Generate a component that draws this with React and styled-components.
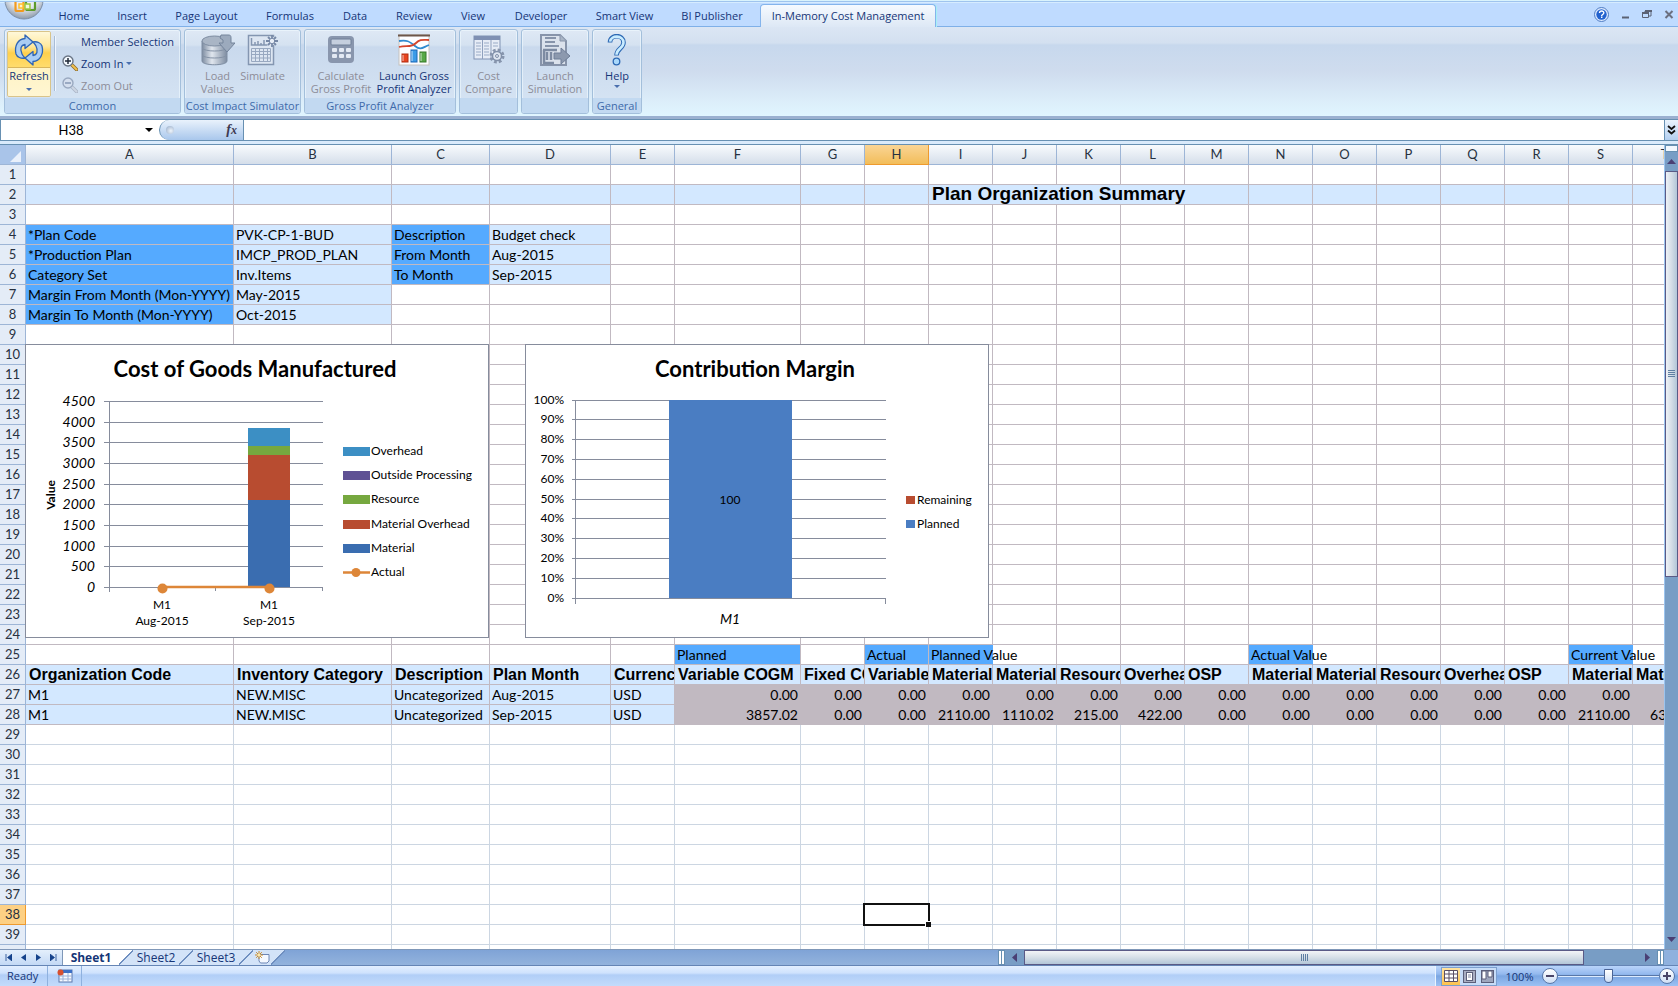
import React from "react";
import styled, { createGlobalStyle, css } from "styled-components";

const GlobalStyle=createGlobalStyle`
   *{
      box-sizing:border-box;
   }
   html,body,#root{
      height:100%;
      margin:0;
   }
   body{
      overflow:hidden;
      font-family:"Open Sans","Noto Sans",sans-serif;
      font-size:11px;
      color:#153577;
   }
   button,input{
      font:inherit;
      color:inherit;
      margin:0;
      padding:0;
      border:0;
      background:none;
   }
`

const tabs=[
   {label:"Home",width:58},
   {label:"Insert",width:58},
   {label:"Page Layout",width:91},
   {label:"Formulas",width:76},
   {label:"Data",width:54},
   {label:"Review",width:64},
   {label:"View",width:54},
   {label:"Developer",width:82},
   {label:"Smart View",width:85},
   {label:"BI Publisher",width:90},
]

const columns=[
   ["A",208],["B",158],["C",98],["D",121],["E",64],["F",126],["G",64],["H",64],["I",64],["J",64],
   ["K",64],["L",64],["M",64],["N",64],["O",64],["P",64],["Q",64],["R",64],["S",64],["T",64],
]

const strong=(text,spill)=>({text,fill:"strong",spill})
const light=(text)=>({text,fill:"light"})
const head=(text)=>({text,fill:"light",heading:true})
const grey=(text)=>({text,fill:"grey",number:true})

const greyRow=(values)=>{
   const cells={}
   values.forEach((value,i)=>{
      cells["FGHIJKLMNOPQRST"[i]]=grey(value)
   })
   return cells
}

const headings=[
   "Organization Code","Inventory Category","Description","Plan Month","Currency","Variable COGM","Fixed COGM",
   "Variable COGM","Material","Material Overhead","Resource","Overhead","OSP","Material","Material Overhead",
   "Resource","Overhead","OSP","Material","Material Overhead",
]

const titleRow={}
columns.forEach(([name])=>{
   titleRow[name]=light("")
})
titleRow.I={text:"Plan Organization Summary",fill:"light",title:true,span:5}

const headingRow={}
columns.forEach(([name],i)=>{
   headingRow[name]=head(headings[i])
})

const sheet={
   2:titleRow,
   4:{A:strong("*Plan Code"),B:light("PVK-CP-1-BUD"),C:strong("Description"),D:light("Budget check")},
   5:{A:strong("*Production Plan"),B:light("IMCP_PROD_PLAN"),C:strong("From Month"),D:light("Aug-2015")},
   6:{A:strong("Category Set"),B:light("Inv.Items"),C:strong("To Month"),D:light("Sep-2015")},
   7:{A:strong("Margin From Month (Mon-YYYY)"),B:light("May-2015")},
   8:{A:strong("Margin To Month (Mon-YYYY)"),B:light("Oct-2015")},
   25:{
      F:strong("Planned"),
      H:strong("Actual"),
      I:strong("Planned Value",true),
      N:strong("Actual Value",true),
      S:strong("Current Value",true),
   },
   26:headingRow,
   27:{
      A:light("M1"),B:light("NEW.MISC"),C:light("Uncategorized"),D:light("Aug-2015"),E:light("USD"),
      ...greyRow(Array(15).fill("0.00")),
   },
   28:{
      A:light("M1"),B:light("NEW.MISC"),C:light("Uncategorized"),D:light("Sep-2015"),E:light("USD"),
      ...greyRow(["3857.02","0.00","0.00","2110.00","1110.02","215.00","422.00","0.00","0.00","0.00","0.00","0.00","0.00","2110.00","633.00"]),
   },
}

const OfficeLogo=()=>(
   <svg width="40" height="20" viewBox="0 0 40 20" aria-hidden="true">
      <defs>
         <radialGradient id="orb" cx="50%" cy="30%" r="70%">
            <stop offset="0" stopColor="#ffffff"/>
            <stop offset="0.6" stopColor="#e6eaf0"/>
            <stop offset="1" stopColor="#8e9bab"/>
         </radialGradient>
      </defs>
      <circle cx="20" cy="-2" r="19" fill="url(#orb)" stroke="#7c8ea6"/>
      <rect x="11.500" y="-4" width="8" height="13" rx="1.500" fill="none" stroke="#f29a1f" strokeWidth="2.200"/>
      <path d="M15 2h4v4h-4z" fill="#fff3c8" stroke="#ffc02e" strokeWidth="1.500"/>
      <rect x="22" y="-4" width="9" height="12" rx="1.500" fill="none" stroke="#5d9b2c" strokeWidth="2.200"/>
      <path d="M21 2h5v5h-5z" fill="#eef7dc" stroke="#9dc940" strokeWidth="1.500"/>
   </svg>
)

const RefreshIcon=()=>(
   <svg width="32" height="32" viewBox="0 0 32 32" aria-hidden="true">
      <g fill="#a9cdf4" stroke="#2f65b5" strokeWidth="1.3" strokeLinejoin="round">
         <path d="M3 20C1 12 5 5 12 4.500V1l8 7-8 6.500V10.500C8 11 6.500 15 9 20c1 2 2 3 3 4-4 1-8-1-9-4z"/>
         <path d="M29 12c2 8-2 15-9 15.500V31l-8-7 8-6.500V21.500c4-.5 5.500-4.500 3-9.500-1-2-2-3-3-4 4-1 8 1 9 4z"/>
      </g>
   </svg>
)

const ZoomGlass=({sign,muted})=>(
   <svg width="16" height="16" viewBox="0 0 16 16" aria-hidden="true">
      <path d="M9.500 9.500l5 5" stroke={muted?"#a9b4c6":"#8a6a2c"} strokeWidth="3.500" strokeLinecap="round"/>
      <path d="M9.500 9.500l5 5" stroke={muted?"#cdd6e4":"#f2c14e"} strokeWidth="2" strokeLinecap="round"/>
      <circle cx="6" cy="6" r="5" fill={muted?"#d5dfee":"#f4f9ff"} stroke={muted?"#9aa9c0":"#6b7686"} strokeWidth="1.400"/>
      <path d={sign==="+"?"M3 6h6M6 3v6":"M3 6h6"} stroke={muted?"#8698b5":"#222b3a"} strokeWidth="1.500"/>
   </svg>
)

const LoadIcon=()=>(
   <svg width="34" height="32" viewBox="0 0 34 32" aria-hidden="true">
      <defs>
         <linearGradient id="drum" x1="0" x2="1" y1="0" y2="0">
            <stop offset="0" stopColor="#7d8ca1"/>
            <stop offset="0.4" stopColor="#e0e6ee"/>
            <stop offset="1" stopColor="#7d8ca1"/>
         </linearGradient>
      </defs>
      <path d="M1 7v20c0 5 25 5 25 0V7z" fill="url(#drum)" stroke="#7e8da2"/>
      <ellipse cx="13.500" cy="7" rx="12.500" ry="5" fill="#a9b5c5" stroke="#7e8da2"/>
      <path d="M1 14c2 4 23 4 25 0M1 21c2 4 23 4 25 0" fill="none" stroke="#8492a6"/>
      <path d="M20 1h7c3 0 3 1 3 4v4h4l-8 9-8-9h4V6l-3-2z" fill="#9caabd" stroke="#74849b"/>
   </svg>
)

const SimulateIcon=()=>(
   <svg width="32" height="32" viewBox="0 0 32 32" aria-hidden="true">
      <path d="M1.500 1.500h25v29h-25z" fill="#dde6f2" stroke="#8496b1" strokeWidth="1.500"/>
      <path d="M4.500 4v7h16M8 11V8M11 11V7M14 11V9M17 11V6" fill="none" stroke="#8496b1" strokeWidth="1.500"/>
      <path d="M4.500 14.500h19v13h-19zM4.500 17.500h19M4.500 20.500h19M4.500 24h19M8.500 14.500v13M12.500 14.500v13M16.500 14.500v13M20.500 14.500v13" fill="none" stroke="#98a8c0"/>
      <circle cx="25" cy="7" r="4" fill="#e8eef7"/>
      <path d="M25 1v4M25 9v4M19 7h4M27 7h4M21 3l2.500 2.500M26.500 8.500L29 11M29 3l-2.500 2.500M23.500 8.500L21 11" stroke="#7688a6" strokeWidth="1.800"/>
   </svg>
)

const CalculatorIcon=()=>(
   <svg width="28" height="32" viewBox="0 0 28 32" aria-hidden="true">
      <rect x="1" y="2" width="26" height="27" rx="4" fill="#8996ad"/>
      <rect x="4" y="5" width="20" height="6" rx="1" fill="#c5cfde" stroke="#6f7e97"/>
      <g fill="#e3e9f3">
         {[14,20].map(y=>[5,12,19].map(x=><rect key={`${x}-${y}`} x={x} y={y} width="5" height="4" rx="1"/>))}
      </g>
   </svg>
)

const AnalyzerIcon=()=>(
   <svg width="32" height="32" viewBox="0 0 32 32" aria-hidden="true">
      <rect x="1" y="1" width="30" height="30" fill="#fdfdff" stroke="#c6c2bd"/>
      <path d="M0 1.500h32" stroke="#6d564a" strokeWidth="2"/>
      <path d="M1 7c8-1 10 0 16 5s8 1 14-1" fill="none" stroke="#2f8bd0" strokeWidth="1.800"/>
      <path d="M1 13c8-2 12 1 17-4 4-4 7-3 13-3" fill="none" stroke="#d3452c" strokeWidth="1.800"/>
      <rect x="4" y="20" width="6" height="8" fill="#e8431f" stroke="#b22e10"/>
      <rect x="13" y="16" width="6" height="12" fill="#3a9be8" stroke="#1d66b5"/>
      <rect x="22" y="18" width="6" height="10" fill="#57a846" stroke="#36782a"/>
      <path d="M5 21v6M14 17v10M23 19v8" stroke="#ffffff" strokeOpacity="0.7"/>
   </svg>
)

const CompareIcon=()=>(
   <svg width="32" height="32" viewBox="0 0 32 32" aria-hidden="true">
      <rect x="1" y="2" width="26" height="23" fill="#e6ecf6" stroke="#8093b4"/>
      <path d="M1 2h26v4H1z" fill="#7f90b3"/>
      <path d="M9.500 6v19M18 6v19" stroke="#8fa0bd"/>
      <path d="M3 9h5M3 12h5M3 15h5M3 18h5M3 21h5M11 9h5M11 12h5M11 15h5M11 18h5M11 21h5M20 9h5M20 12h5" stroke="#9aabc6"/>
      <circle cx="24" cy="22" r="6" fill="none" stroke="#8795ad" strokeWidth="3" strokeDasharray="2.700 2"/>
      <circle cx="24" cy="22" r="4.500" fill="#dfe6f1" stroke="#8190a9" strokeWidth="1.500"/>
      <circle cx="24" cy="22" r="1.500" fill="none" stroke="#8190a9"/>
   </svg>
)

const LaunchIcon=()=>(
   <svg width="32" height="32" viewBox="0 0 32 32" aria-hidden="true">
      <path d="M2 1h19l6 6v24H2z" fill="#dbe2ec" stroke="#8794aa" strokeWidth="2"/>
      <path d="M21 1v6h6" fill="#a9b5c6" stroke="#8794aa"/>
      <path d="M6 4h11M6 8h6M6 12h14M10 8l6 0" stroke="#8794aa" strokeWidth="2"/>
      <path d="M5 16v13h10M8 18v8M12 18v8M4 16h14" fill="none" stroke="#7d8ba2" strokeWidth="2.500"/>
      <path d="M15 19h7v-5l9 8-9 8v-5h-7z" fill="#8c99ae" stroke="#6f7f98"/>
   </svg>
)

const HelpIcon=()=>(
   <svg width="20" height="32" viewBox="0 0 20 32" aria-hidden="true">
      <path d="M3 8.500c0-8.500 13.500-8.500 13.500 0 0 6-7 6-7 13" fill="none" stroke="#2d69b4" strokeWidth="4.600"/>
      <path d="M3.100 7.600c.8-7 13.400-6.600 13.400 .9 0 6-7 6-7 12.300" fill="none" stroke="#c8ecff" strokeWidth="2.600"/>
      <circle cx="9.500" cy="27.500" r="3.300" fill="#a9d8fb" stroke="#2d69b4" strokeWidth="1.300"/>
   </svg>
)

const WindowIcons={
   help:<svg width="15" height="15" viewBox="0 0 15 15"><circle cx="7.500" cy="7.500" r="7" fill="#dceaff" stroke="#4f7cc4"/><circle cx="7.500" cy="7.500" r="5.200" fill="#2262cf"/><path d="M5.500 6c0-3 4.500-2.500 4.300 0-.2 1.500-2.200 1.500-2.200 3" fill="none" stroke="#fff" strokeWidth="1.400"/><path d="M7 10.200h1.400" stroke="#fff" strokeWidth="1.400"/></svg>,
   minimize:<svg width="9" height="9" viewBox="0 0 9 9"><path d="M1 7.500h7" stroke="#5b6274" strokeWidth="2"/></svg>,
   restore:<svg width="10" height="9" viewBox="0 0 10 9"><path d="M3 3V1h6v5H7" fill="none" stroke="#5b6274"/><path d="M.5 3h6v4.500h-6z" fill="none" stroke="#5b6274"/><path d="M0 3h7M3 1h7" stroke="#5b6274" strokeWidth="2"/></svg>,
   close:<svg width="10" height="9" viewBox="0 0 10 9"><path d="M1.500 1l7 7M8.500 1l-7 7" stroke="#6b7080" strokeWidth="2"/></svg>,
}

const CogmChart=()=>{
   const ticks=[4500,4000,3500,3000,2500,2000,1500,1000,500,0]
   const legend=[
      ["Overhead","#3c8fc4",107],
      ["Outside Processing","#5f5194",131],
      ["Resource","#76a83f",155],
      ["Material Overhead","#b84c30",180],
      ["Material","#3a6db0",204],
   ]
   return (
      <svg width="462" height="292" viewBox="1 1 462 292" role="img" aria-label="Cost of Goods Manufactured">
         <ChartTitle x="230" y="33">Cost of Goods Manufactured</ChartTitle>
         {ticks.map((tick,i)=>{
            const y=Math.round(57+i*186/9)+0.5
            return (
               <g key={tick}>
                  <path d={`M79 ${y}H298`} stroke="#868c9c"/>
                  <AxisText x="70" y={y+4.500} $end $big>{tick}</AxisText>
               </g>
            )
         })}
         <path d="M84.500 57V248M190.500 243v4M297.500 243v4" stroke="#868c9c"/>
         <rect x="223" y="84" width="42" height="18" fill="#3c8fc4"/>
         <rect x="223" y="102" width="42" height="9" fill="#76a83f"/>
         <rect x="223" y="111" width="42" height="45" fill="#b84c30"/>
         <rect x="223" y="156" width="42" height="87" fill="#3a6db0"/>
         <path d="M138 243H244" stroke="#dd8638" strokeWidth="2.500"/>
         <circle cx="137.500" cy="244.500" r="5" fill="#dd8638"/>
         <circle cx="244.500" cy="244.500" r="5" fill="#dd8638"/>
         <AxisText x="137" y="265" $middle>M1</AxisText>
         <AxisText x="137" y="281" $middle>Aug-2015</AxisText>
         <AxisText x="244" y="265" $middle>M1</AxisText>
         <AxisText x="244" y="281" $middle>Sep-2015</AxisText>
         <AxisText $middle $bold transform="translate(30 151) rotate(-90)">Value</AxisText>
         {legend.map(([name,color,y])=>(
            <g key={name}>
               <rect x="318" y={y-4} width="27" height="9" fill={color}/>
               <AxisText x="346" y={y+4}>{name}</AxisText>
            </g>
         ))}
         <path d="M318 228.500h27" stroke="#dd8638" strokeWidth="2.500"/>
         <circle cx="331" cy="228.500" r="4.500" fill="#dd8638"/>
         <AxisText x="346" y="232">Actual</AxisText>
      </svg>
   )
}

const MarginChart=()=>{
   const ticks=[100,90,80,70,60,50,40,30,20,10,0]
   return (
      <svg width="462" height="292" viewBox="1 1 462 292" role="img" aria-label="Contribution Margin">
         <ChartTitle x="230" y="33">Contribution Margin</ChartTitle>
         {ticks.map((tick,i)=>{
            const y=Math.floor(56+i*198/10)+0.5
            return (
               <g key={tick}>
                  <path d={`M47 ${y}H361`} stroke="#868c9c"/>
                  <AxisText x="39" y={y+3.500} $end>{tick}%</AxisText>
               </g>
            )
         })}
         <path d="M50.500 56V260M360.500 254v6" stroke="#868c9c"/>
         <rect x="144" y="56" width="123" height="198" fill="#4a7dc2"/>
         <AxisText x="205" y="160" $middle>100</AxisText>
         <AxisText x="205" y="280" $middle $big>M1</AxisText>
         <rect x="381" y="152" width="9" height="8" fill="#b84c30"/>
         <AxisText x="392" y="160">Remaining</AxisText>
         <rect x="381" y="176" width="9" height="8" fill="#4a7dc2"/>
         <AxisText x="392" y="184">Planned</AxisText>
      </svg>
   )
}

const RibbonButton=({icon,lines,disabled,arrow,width})=>(
   <BigButton type="button" disabled={disabled} $width={width}>
      {icon}
      <span>
         {lines.map(line=><ButtonLine key={line}>{line}</ButtonLine>)}
      </span>
      {arrow&&<Caret/>}
   </BigButton>
)

const Cell=({cell={},active,soft})=>(
   <Td
      colSpan={cell.span}
      $fill={cell.fill}
      $number={cell.number}
      $heading={cell.heading}
      $title={cell.title}
      $spill={cell.spill}
      $soft={soft}
      $active={active}
   >
      {cell.text}
      {active&&<Selection/>}
   </Td>
)

const SheetRow=({number})=>{
   const cells=sheet[number]||{}
   const soft=number>28
   const out=[]
   for(let i=0;i<columns.length;i++){
      const name=columns[i][0]
      const cell=cells[name]
      out.push(<Cell key={name} cell={cell} soft={soft} active={name==="H"&&number===38}/>)
      if(cell&&cell.span) i+=cell.span-1
   }
   return (
      <tr>
         <RowHead scope="row" $active={number===38}>{number}</RowHead>
         {out}
      </tr>
   )
}

const App=()=>{
   return (
      <Page>
         <GlobalStyle/>
         <TitleEdge/>
         <TabBar>
            <OfficeButton type="button" aria-label="Office Button"><OfficeLogo/></OfficeButton>
            {tabs.map(tab=><Tab key={tab.label} type="button" $width={tab.width}>{tab.label}</Tab>)}
            <ActiveTab type="button">In-Memory Cost Management</ActiveTab>
            <WindowButtons>
               {Object.entries(WindowIcons).map(([name,icon])=>(
                  <button key={name} type="button" aria-label={name}>{icon}</button>
               ))}
            </WindowButtons>
         </TabBar>
         <Ribbon>
            <Group $width={177}>
               <GroupBody $common>
                  <RefreshButton type="button">
                     <RefreshTop><RefreshIcon/></RefreshTop>
                     <RefreshBottom>Refresh<Caret/></RefreshBottom>
                  </RefreshButton>
                  <Divider/>
                  <SmallButtons>
                     <SmallButton type="button" $indent>Member Selection</SmallButton>
                     <SmallButton type="button"><ZoomGlass sign="+"/>Zoom In<Caret/></SmallButton>
                     <SmallButton type="button" disabled><ZoomGlass sign="-" muted/>Zoom Out</SmallButton>
                  </SmallButtons>
               </GroupBody>
               <GroupLabel>Common</GroupLabel>
            </Group>
            <Group $width={117}>
               <GroupBody>
                  <RibbonButton disabled icon={<LoadIcon/>} lines={["Load","Values"]} width={40}/>
                  <RibbonButton disabled icon={<SimulateIcon/>} lines={["Simulate"]} width={50}/>
               </GroupBody>
               <GroupLabel>Cost Impact Simulator</GroupLabel>
            </Group>
            <Group $width={152}>
               <GroupBody>
                  <RibbonButton disabled icon={<CalculatorIcon/>} lines={["Calculate","Gross Profit"]} width={68}/>
                  <RibbonButton icon={<AnalyzerIcon/>} lines={["Launch Gross","Profit Analyzer"]} width={78}/>
               </GroupBody>
               <GroupLabel>Gross Profit Analyzer</GroupLabel>
            </Group>
            <Group $width={59}>
               <GroupBody>
                  <RibbonButton disabled icon={<CompareIcon/>} lines={["Cost","Compare"]} width={53}/>
               </GroupBody>
               <GroupLabel/>
            </Group>
            <Group $width={68}>
               <GroupBody>
                  <RibbonButton disabled icon={<LaunchIcon/>} lines={["Launch","Simulation"]} width={62}/>
               </GroupBody>
               <GroupLabel/>
            </Group>
            <Group $width={50}>
               <GroupBody>
                  <RibbonButton arrow icon={<HelpIcon/>} lines={["Help"]} width={40}/>
               </GroupBody>
               <GroupLabel>General</GroupLabel>
            </Group>
         </Ribbon>
         <FormulaBar>
            <NameBox>
               <NameInput aria-label="Name Box" defaultValue="H38"/>
               <Caret $dark/>
            </NameBox>
            <FxArea>
               <FxPill>
                  <Knob/>
                  <FxButton type="button">f<sub>x</sub></FxButton>
               </FxPill>
            </FxArea>
            <FormulaInput aria-label="Formula"/>
            <ExpandButton type="button" aria-label="Expand formula bar">
               <svg width="9" height="10" viewBox="0 0 9 10"><path d="M1 1l3.500 3L8 1M1 5.500l3.500 3 3.500-3" fill="none" stroke="#111" strokeWidth="1.800"/></svg>
            </ExpandButton>
         </FormulaBar>
         <Workspace>
            <SheetArea>
               <Table>
                  <colgroup>
                     <Col $width={26}/>
                     {columns.map(([name,width])=><Col key={name} $width={width}/>)}
                  </colgroup>
                  <thead>
                     <tr>
                        <Corner aria-label="Select all">
                           <svg width="13" height="13" viewBox="0 0 13 13"><path d="M12 1v11H1z" fill="#e9f0fb"/></svg>
                        </Corner>
                        {columns.map(([name])=><ColHead key={name} scope="col" $active={name==="H"}>{name}</ColHead>)}
                     </tr>
                  </thead>
                  <tbody>
                     {Array.from({length:40},(_,i)=><SheetRow key={i} number={i+1}/>)}
                  </tbody>
               </Table>
               <ChartBox $left={25}><CogmChart/></ChartBox>
               <ChartBox $left={525}><MarginChart/></ChartBox>
            </SheetArea>
            <VScroll>
               <SplitBox/>
               <ScrollArrow type="button" aria-label="Scroll up">
                  <svg width="9" height="5" viewBox="0 0 9 5"><path d="M0 5l4.500-5L9 5z" fill="#4a3f74"/></svg>
               </ScrollArrow>
               <VThumb><i/><i/><i/><i/></VThumb>
               <VSpace/>
               <ScrollArrow type="button" aria-label="Scroll down">
                  <svg width="9" height="5" viewBox="0 0 9 5"><path d="M0 0l4.500 5L9 0z" fill="#4a3f74"/></svg>
               </ScrollArrow>
            </VScroll>
         </Workspace>
         <BottomBar>
            <SheetTabs>
               <SheetNav>
                  <button type="button" aria-label="First sheet"><svg width="7" height="7" viewBox="0 0 7 7"><path d="M1 0v7M7 0v7L2.500 3.500z" fill="#15428b" stroke="#15428b" strokeWidth="0.800"/></svg></button>
                  <button type="button" aria-label="Previous sheet"><svg width="5" height="7" viewBox="0 0 5 7"><path d="M5 0v7L0 3.500z" fill="#15428b"/></svg></button>
                  <button type="button" aria-label="Next sheet"><svg width="5" height="7" viewBox="0 0 5 7"><path d="M0 0v7l5-3.500z" fill="#15428b"/></svg></button>
                  <button type="button" aria-label="Last sheet"><svg width="7" height="7" viewBox="0 0 7 7"><path d="M6 0v7M0 0v7l4.500-3.500z" fill="#15428b" stroke="#15428b" strokeWidth="0.800"/></svg></button>
               </SheetNav>
               <SheetTab type="button" $current $width={56}>Sheet1</SheetTab>
               <Slant $from="#ffffff"/>
               <SheetTab type="button" $width={46}>Sheet2</SheetTab>
               <Slant $from="#d3e3f8"/>
               <SheetTab type="button" $width={46}>Sheet3</SheetTab>
               <Slant $from="#d3e3f8"/>
               <SheetTab type="button" $width={18} aria-label="Insert Worksheet">
                  <svg width="15" height="13" viewBox="0 0 15 13">
                     <path d="M4 3.500h10V10l-2 2H5.500L4 10z" fill="#f4f8ff" stroke="#6d86b5"/>
                     <path d="M4 0v8M0 4h8M1.200 1.200l5.600 5.600M6.800 1.200L1.200 6.800" stroke="#c98a2a"/>
                     <circle cx="4" cy="4" r="1.500" fill="#ffe9a8"/>
                  </svg>
               </SheetTab>
               <Slant $from="#d3e3f8" $last/>
            </SheetTabs>
            <HScroll>
               <HSplit/>
               <HArrow type="button" aria-label="Scroll left"><svg width="5" height="9" viewBox="0 0 5 9"><path d="M5 0v9L0 4.500z" fill="#4a3f74"/></svg></HArrow>
               <HThumb><i/><i/><i/><i/></HThumb>
               <HSpace/>
               <HArrow type="button" aria-label="Scroll right"><svg width="5" height="9" viewBox="0 0 5 9"><path d="M0 0v9l5-4.500z" fill="#4a3f74"/></svg></HArrow>
               <HSplit/>
               <HEnd/>
            </HScroll>
         </BottomBar>
         <StatusBar>
            <StatusText>Ready</StatusText>
            <MacroButton type="button" aria-label="Record Macro">
               <svg width="16" height="14" viewBox="0 0 16 14">
                  <rect x="2" y="1" width="13" height="12" fill="#f6f9ff" stroke="#5d79ad"/>
                  <path d="M5 1h10v3H5z" fill="#3c6fc5"/>
                  <path d="M2 7h13M2 10h13M6 4v9M11 4v9" stroke="#9bb0d6"/>
                  <circle cx="3.500" cy="3.500" r="3" fill="#d8502f"/>
               </svg>
            </MacroButton>
            <ZoomZone>
               <ViewButtons>
                  <ViewButton type="button" aria-label="Normal" $on>
                     <svg width="14" height="12" viewBox="0 0 14 12"><path d="M.5.5h13v11H.5zM.5 4h13M.5 8h13M5 .5v11M9.500.5v11" fill="#fff" stroke="#5b4f63"/></svg>
                  </ViewButton>
                  <ViewButton type="button" aria-label="Page Layout">
                     <svg width="13" height="13" viewBox="0 0 13 13"><rect x="0.500" y="0.500" width="12" height="12" fill="#a9aec2" stroke="#5b5f7a"/><rect x="3.500" y="2.500" width="6" height="8" fill="#fff" stroke="#5b5f7a"/><path d="M5 5h3M5 7h3" stroke="#8289a5"/></svg>
                  </ViewButton>
                  <ViewButton type="button" aria-label="Page Break Preview">
                     <svg width="13" height="13" viewBox="0 0 13 13"><rect x="0.500" y="0.500" width="12" height="12" fill="#9ea6bd" stroke="#5b5f7a"/><path d="M1 1h4v8H1zM7 1h4v6H7z" fill="#fff" stroke="#5b5f7a"/></svg>
                  </ViewButton>
               </ViewButtons>
               <ZoomText type="button">100%</ZoomText>
               <RoundButton type="button" aria-label="Zoom out"><svg width="8" height="8" viewBox="0 0 8 8"><path d="M0 4h8" stroke="#4a4668" strokeWidth="2"/></svg></RoundButton>
               <ZoomSlider type="range" min="0" max="100" defaultValue="50" aria-label="Zoom"/>
               <RoundButton type="button" aria-label="Zoom in"><svg width="8" height="8" viewBox="0 0 8 8"><path d="M0 4h8M4 0v8" stroke="#4a4668" strokeWidth="2"/></svg></RoundButton>
            </ZoomZone>
         </StatusBar>
      </Page>
   )
}

const Page=styled.main`
   height:100vh;
   display:flex;
   flex-direction:column;
   background:#c0d9fb;
`
const TitleEdge=styled.div`
   flex:none;
   height:3px;
   background:linear-gradient(#d9f3fd 0 1px,#9fc4ee 1px 2px,#d6ecff 2px 3px);
`
const TabBar=styled.nav`
   flex:none;
   display:flex;
   align-items:flex-end;
   height:24px;
   border-bottom:1px solid #7fb0e8;
   background:#bfdbff;
`
const OfficeButton=styled.button`
   width:45px;
   height:26px;
   padding-left:2px;
   display:block;
   z-index:2;
`
const Tab=styled.button`
   width:${p=>p.$width}px;
   height:21px;
   line-height:18px;
   white-space:nowrap;
`
const ActiveTab=styled.button`
   width:176px;
   height:23px;
   margin-left:3px;
   margin-bottom:-1px;
   padding-bottom:1px;
   line-height:18px;
   white-space:nowrap;
   border:1px solid #84b4ec;
   border-bottom:0;
   border-radius:4px 4px 0 0;
   background:linear-gradient(#f6faff,#dde8f5);
   box-shadow:1px 0 0 #a8f0f4;
`
const WindowButtons=styled.div`
   flex:1;
   display:flex;
   justify-content:flex-end;
   align-items:center;
   height:23px;
   gap:12px;
   padding-right:4px;
   button{
      display:flex;
   }
`
const Ribbon=styled.section`
   flex:none;
   display:flex;
   gap:3px;
   height:92px;
   padding:2px 4px 5px;
   border-bottom:3px solid #9ab0d0;
   background:linear-gradient(#dbe6f4 0,#d3e0f0 16px,#c7d8ed 18px,#cfdcee 45px,#dceefa 75px,#e0f5ff 100%);
`
const Group=styled.div`
   width:${p=>p.$width}px;
   height:85px;
   display:flex;
   flex-direction:column;
   border:1px solid #a3bfdb;
   border-radius:3px;
   box-shadow:inset 0 0 0 1px rgba(240,250,255,0.6);
   overflow:hidden;
   background:linear-gradient(#dfe9f5 0,#d5e2f1 15px,#c9d9ed 17px,#d7e5f4 100%);
`
const GroupBody=styled.div`
   flex:1;
   display:flex;
   justify-content:${p=>p.$common?"flex-start":"center"};
   padding:${p=>p.$common?"1px 2px 0":"4px 0 0"};
`
const GroupLabel=styled.div`
   height:15px;
   line-height:15px;
   text-align:center;
   white-space:nowrap;
   color:#3e6aaa;
   background:#c2d9f1;
`
const BigButton=styled.button`
   width:${p=>p.$width}px;
   display:flex;
   flex-direction:column;
   align-items:center;
   gap:3px;
   &:disabled{
      color:#8d8d98;
   }
`
const ButtonLine=styled.span`
   display:block;
   line-height:13px;
   white-space:nowrap;
`
const Caret=styled.i`
   width:0;
   height:0;
   border:3px solid transparent;
   border-top-color:${p=>p.$dark?"#000":"#4a6fae"};
   border-bottom:0;
   ${p=>p.$dark&&css`
      border-width:4px 4px 0;
   `}
`
const RefreshButton=styled.button`
   width:44px;
   height:66px;
   display:flex;
   flex-direction:column;
   border:1px solid #d9c48a;
   border-radius:2px;
   overflow:hidden;
`
const RefreshTop=styled.span`
   width:100%;
   height:36px;
   display:flex;
   justify-content:center;
   align-items:center;
   background:linear-gradient(#fff8d9 0,#ffe9a0 40%,#ffd04d 60%,#ffdc6c 100%);
   border-bottom:1px solid #d9b65c;
`
const RefreshBottom=styled.span`
   flex:1;
   width:100%;
   display:flex;
   flex-direction:column;
   align-items:center;
   gap:4px;
   line-height:16px;
   background:linear-gradient(#fff3c4,#fff6d2);
`
const Divider=styled.span`
   width:2px;
   height:55px;
   margin:5px 6px 0 3px;
   background:linear-gradient(90deg,#a9bcd6 50%,#eff6ff 50%);
`
const SmallButtons=styled.div`
   display:flex;
   flex-direction:column;
`
const SmallButton=styled.button`
   height:22px;
   padding-bottom:2px;
   display:flex;
   align-items:center;
   gap:3px;
   white-space:nowrap;
   padding-left:${p=>p.$indent?"19px":"0"};
   &:disabled{
      color:#8d8d98;
   }
`
const FormulaBar=styled.div`
   flex:none;
   display:flex;
   height:26px;
   border:1px solid #6790b2;
   border-width:1px 0;
   background:linear-gradient(#fff 0 20px,#6790b2 20px 21px,#d9eafb 21px);
`
const NameBox=styled.div`
   width:159px;
   height:20px;
   display:flex;
   align-items:center;
   border-left:1px solid #6790b2;
   padding-right:6px;
`
const NameInput=styled.input`
   flex:1;
   min-width:0;
   padding-right:4px;
   text-align:center;
   font-family:Lato,sans-serif;
   font-size:13px;
   color:#000;
`
const FxArea=styled.div`
   width:85px;
   height:20px;
   border-right:1px solid #6790b2;
`
const FxPill=styled.div`
   height:20px;
   display:flex;
   align-items:center;
   justify-content:space-between;
   padding:0 6px;
   border-left:1px solid #6790b2;
   border-radius:10px 0 0 10px;
   background:linear-gradient(#e9f2fc,#a9c7ec);
`
const Knob=styled.i`
   width:8px;
   height:8px;
   border-radius:50%;
   background:radial-gradient(circle at 60% 60%,#eef4fb,#93a9c6);
`
const FxButton=styled.button`
   font:italic bold 14px/18px "Liberation Serif",serif;
   color:#3d3a52;
   sub{
      font-size:12px;
      line-height:0;
      vertical-align:baseline;
   }
`
const FormulaInput=styled.input`
   flex:1;
   height:20px;
   padding:0 4px;
   font-family:Lato,sans-serif;
   font-size:14px;
`
const ExpandButton=styled.button`
   width:14px;
   height:20px;
   display:flex;
   align-items:center;
   justify-content:center;
   border-left:1px solid #6790b2;
   background:linear-gradient(#eaf3fd,#b3cff0);
`
const Workspace=styled.div`
   flex:1;
   min-height:0;
   display:flex;
   background:#fff;
`
const SheetArea=styled.div`
   flex:1;
   min-width:0;
   position:relative;
   overflow:hidden;
`
const Table=styled.table`
   width:0;
   table-layout:fixed;
   border-collapse:separate;
   border-spacing:0;
   font-family:Lato,sans-serif;
   font-size:14px;
   line-height:19px;
   color:#000;
`
const Col=styled.col`
   width:${p=>p.$width}px;
`
const HeadCell=styled.th`
   height:20px;
   padding:0;
   overflow:hidden;
   font-size:13px;
   font-weight:normal;
   text-align:center;
   color:#27313f;
   border:solid #9db5d6;
   border-width:0 1px 1px 0;
`
const Corner=styled(HeadCell)`
   background:#a9c4e9;
   svg{
      display:block;
      margin:3px 3px 0 auto;
   }
`
const ColHead=styled(HeadCell)`
   background:${p=>p.$active?"linear-gradient(#fad595,#f2bd5a)":"linear-gradient(#f8fbfd,#d5deea)"};
   border-color:${p=>p.$active?"#ee9a2e":"#9db5d6"};
`
const RowHead=styled(HeadCell)`
   background:${p=>p.$active?"#fdd084":"#e4ecf7"};
   border-color:${p=>p.$active?"#ee9a2e":"#9db5d6"};
`
const fills={
   strong:"#55aaff",
   light:"#d3e8ff",
   grey:"#c1b9c1",
}
const Td=styled.td`
   height:20px;
   padding:0 2px;
   overflow:hidden;
   white-space:nowrap;
   text-align:${p=>p.$number?"right":"left"};
   background:${p=>fills[p.$fill]||"transparent"};
   border:solid ${p=>p.$soft?"#ccd6e2":"#c1b9c1"};
   border-width:0 1px 1px 0;
   ${p=>p.$spill&&css`
      overflow:visible;
      border-right-color:transparent;
   `}
   ${p=>p.$heading&&css`
      font:bold 16px/19px "Liberation Sans",sans-serif;
      padding-left:3px;
   `}
   ${p=>p.$title&&css`
      font:bold 19px/17px "Liberation Sans",sans-serif;
      padding-left:3px;
      vertical-align:top;
   `}
   ${p=>p.$active&&css`
      position:relative;
      overflow:visible;
   `}
`
const Selection=styled.span`
   position:absolute;
   inset:-2px;
   border:2px solid #111;
   &::after{
      content:"";
      position:absolute;
      right:-3px;
      bottom:-3px;
      width:5px;
      height:5px;
      background:#111;
      border:solid #fff;
      border-width:1px 0 0 1px;
   }
`
const ChartBox=styled.figure`
   position:absolute;
   left:${p=>p.$left}px;
   top:199px;
   margin:0;
   border:1px solid #868c9c;
   background:#fff;
   svg{
      display:block;
   }
`
const ChartTitle=styled.text`
   font:bold 22px Lato,sans-serif;
   text-anchor:middle;
   fill:#000;
`
const AxisText=styled.text`
   font-family:Lato,sans-serif;
   font-size:${p=>p.$big?14:12}px;
   font-style:${p=>p.$big?"italic":"normal"};
   font-weight:${p=>p.$bold?"bold":"normal"};
   text-anchor:${p=>p.$end?"end":p.$middle?"middle":"start"};
   fill:#000;
`
const VScroll=styled.div`
   width:14px;
   display:flex;
   flex-direction:column;
   background:#789dc5;
   border-left:1px solid #9cc4ee;
`
const SplitBox=styled.span`
   height:7px;
   border:1px solid #6790b2;
   background:#f2f8ff;
`
const ScrollArrow=styled.button`
   height:19px;
   display:flex;
   align-items:center;
   justify-content:center;
`
const VThumb=styled.div`
   flex:405;
   display:flex;
   flex-direction:column;
   justify-content:center;
   align-items:center;
   gap:1px;
   border:1px solid #5a5a86;
   background:linear-gradient(90deg,#eef2f6,#d4dde7 50%,#b3c6d8);
   i{
      width:7px;
      height:1px;
      background:#5f7fa3;
   }
`
const VSpace=styled.div`
   flex:354;
`
const BottomBar=styled.div`
   flex:none;
   height:17px;
   display:flex;
   border-top:1px solid #7f97b8;
   border-bottom:1px solid #6585b5;
   background:linear-gradient(#7fa3d6,#93b3dd);
`
const SheetTabs=styled.div`
   flex:998;
   display:flex;
`
const SheetNav=styled.div`
   width:63px;
   display:flex;
   justify-content:space-around;
   align-items:center;
   border-right:1px solid #7f97b8;
   background:linear-gradient(#e4effc,#c3d9f5);
   button{
      display:flex;
   }
`
const SheetTab=styled.button`
   width:${p=>p.$width}px;
   display:flex;
   align-items:center;
   justify-content:center;
   font-size:12px;
   line-height:14px;
   font-weight:${p=>p.$current?"bold":"normal"};
   background:${p=>p.$current?"#fff":"#d3e3f8"};
`
const Slant=styled.i`
   width:14px;
   background:linear-gradient(135deg,${p=>p.$from} 48%,#6f8fc0 48% 53%,${p=>p.$last?"transparent":"#d3e3f8"} 53%);
`
const HScroll=styled.div`
   flex:680;
   display:flex;
   background:#789dc5;
`
const HSplit=styled.span`
   width:7px;
   border:1px solid #6790b2;
   background:linear-gradient(90deg,#fff 40%,#6790b2 40% 60%,#fff 60%);
`
const HArrow=styled.button`
   width:19px;
   display:flex;
   align-items:center;
   justify-content:center;
`
const HThumb=styled.div`
   flex:560;
   display:flex;
   align-items:center;
   justify-content:center;
   gap:1px;
   border:1px solid #5a5a86;
   background:linear-gradient(#f2f4f7,#d5dee7 50%,#b3c6d8);
   i{
      width:1px;
      height:7px;
      background:#5f7fa3;
   }
`
const HSpace=styled.div`
   flex:54;
`
const HEnd=styled.span`
   width:14px;
   background:#8fb1de;
`
const StatusBar=styled.footer`
   flex:none;
   height:20px;
   display:flex;
   align-items:stretch;
   background:linear-gradient(#e3efff 0,#cfe2fd 35%,#b1cef7 45%,#c3dbfb 100%);
`
const StatusText=styled.span`
   width:48px;
   padding-left:7px;
   line-height:19px;
   border-right:1px solid #8fb1de;
`
const MacroButton=styled.button`
   width:34px;
   display:flex;
   align-items:center;
   justify-content:center;
   border-right:1px solid #8fb1de;
`
const ZoomZone=styled.div`
   display:flex;
   align-items:center;
   margin-left:auto;
   padding:0 3px 0 5px;
   border-left:1px solid #eaf4ff;
   background:linear-gradient(#b9d4fa 0,#94b9ee 40%,#7ba6e2 50%,#9cc1f3 100%);
`
const ViewButtons=styled.div`
   display:flex;
   height:19px;
   border:1px solid #7c9fce;
   background:#c7dcf7;
`
const ViewButton=styled.button`
   width:18px;
   display:flex;
   align-items:center;
   justify-content:center;
   background:${p=>p.$on?"linear-gradient(#ffe3a1,#fdc24e)":"transparent"};
`
const ZoomText=styled.button`
   width:45px;
`
const RoundButton=styled.button`
   width:16px;
   height:16px;
   display:flex;
   align-items:center;
   justify-content:center;
   border:1px solid #5877a8;
   border-radius:50%;
   background:linear-gradient(#fff,#cfdff5);
`
const ZoomSlider=styled.input`
   appearance:none;
   width:101px;
   height:16px;
   background:linear-gradient(#0000 7px,#5877a8 7px 8px,#dcebff 8px 9px,#0000 9px);
   &::-webkit-slider-thumb{
      appearance:none;
      width:9px;
      height:14px;
      border:1px solid #4a6496;
      border-radius:1px 1px 5px 5px;
      background:linear-gradient(#fff,#cddef5);
   }
`
export default App
